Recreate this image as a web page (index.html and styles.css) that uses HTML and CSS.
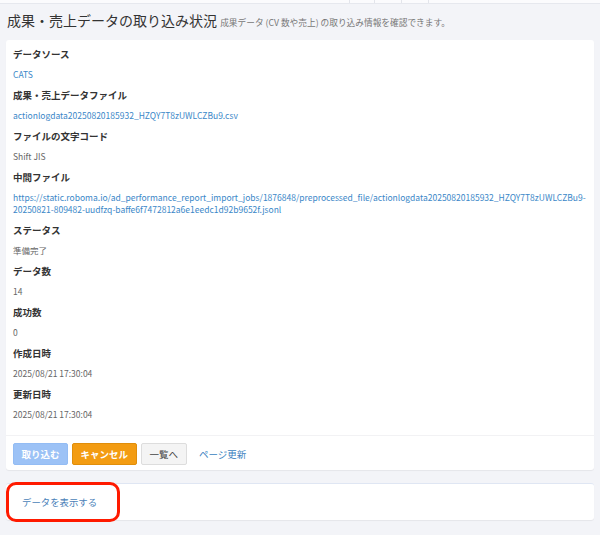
FILE: index.html
```html
<!DOCTYPE html>
<html lang="ja">
<head>
<meta charset="utf-8">
<title>成果・売上データの取り込み状況</title>
<link rel="stylesheet" href="styles.css">
</head>
<body>
<div class="topstrip">
  <div class="cell cell-a"></div>
  <div class="cell cell-b"></div>
  <div class="cell cell-c"></div>
  <div class="cell cell-d"></div>
  <div class="cell cell-e"></div>
</div>
<div class="page">
  <h1 class="title">成果・売上データの取り込み状況 <small class="subtitle">成果データ (CV 数や売上) の取り込み情報を確認できます。</small></h1>

  <div class="card">
    <dl class="details">
      <dt>データソース</dt>
      <dd><a class="link" href="#">CATS</a></dd>
      <dt>成果・売上データファイル</dt>
      <dd><a class="link" href="#">actionlogdata20250820185932_HZQY7T8zUWLCZBu9.csv</a></dd>
      <dt>ファイルの文字コード</dt>
      <dd>Shift JIS</dd>
      <dt>中間ファイル</dt>
      <dd><a class="link" href="#">https://static.roboma.io/ad_performance_report_import_jobs/1876848/preprocessed_file/actionlogdata20250820185932_HZQY7T8zUWLCZBu9-20250821-809482-uudfzq-baffe6f7472812a6e1eedc1d92b9652f.jsonl</a></dd>
      <dt>ステータス</dt>
      <dd>準備完了</dd>
      <dt>データ数</dt>
      <dd>14</dd>
      <dt>成功数</dt>
      <dd>0</dd>
      <dt>作成日時</dt>
      <dd>2025/08/21 17:30:04</dd>
      <dt>更新日時</dt>
      <dd>2025/08/21 17:30:04</dd>
    </dl>
    <div class="card-footer">
      <button class="btn btn-primary" disabled>取り込む</button>
      <button class="btn btn-warning">キャンセル</button>
      <button class="btn btn-default">一覧へ</button>
      <a class="btn-link" href="#">ページ更新</a>
    </div>
  </div>

  <div class="card card-data">
    <a class="data-link" href="#">データを表示する</a>
    <div class="highlight"></div>
  </div>
</div>
</body>
</html>
```

FILE: styles.css
```css
* { box-sizing: border-box; }
html, body {
  margin: 0;
  padding: 0;
}
body {
  background: #f3f4f8;
  font-family: "Noto Sans CJK JP", "Noto Sans", sans-serif;
  color: #333;
  height: 535px;
  overflow: hidden;
}
.topstrip {
  display: flex;
  height: 4px;
  background: #fbfbfd;
  border-bottom: 1px solid #e6e8ee;
}
.cell { height: 100%; border-right: 1px solid #e3e5eb; }
.cell-a { width: 350px; }
.cell-b { width: 25px; }
.cell-c { width: 27px; }
.cell-d { width: 27px; }
.cell-e { flex: 1; border-right: none; }
.page {
  padding: 0 6px;
}
.title {
  margin: 4px 0 0 1px;
  font-size: 14px;
  line-height: 24px;
  font-weight: 400;
  color: #333;
  white-space: nowrap;
}
.subtitle {
  font-size: 8.7px;
  color: #777;
  font-weight: 400;
}
.card {
  margin-top: 5px;
  background: #fff;
  border-radius: 3px;
  box-shadow: 0 1px 1px rgba(0, 0, 0, 0.06);
}
.details {
  margin: 0;
  padding: 7px 7px 7px 7px;
}
.details dt {
  font-size: 9.5px;
  line-height: 14px;
  font-weight: 700;
  color: #333;
}
.details dd {
  margin: 7px 0 8px 0;
  font-size: 8.5px;
  line-height: 12px;
  color: #666;
}
.link {
  color: #3a87c8;
  text-decoration: none;
}
.card-footer {
  border-top: 1px solid #f2f2f4;
  padding: 7px 7px 5px;
  display: flex;
  align-items: center;
  gap: 4px;
}
.btn {
  height: 22px;
  padding: 0 7.5px;
  border-radius: 2px;
  font-family: inherit;
  font-size: 9.5px;
  font-weight: 700;
  border: 1px solid transparent;
  line-height: 20px;
}
.btn-primary {
  background: #9cc2f6;
  border-color: #93bcf4;
  color: #fff;
}
.btn-warning {
  background: #f39c12;
  border-color: #e08e0b;
  color: #fff;
}
.btn-default {
  background: #f4f4f4;
  border-color: #ddd;
  color: #444;
  font-weight: 400;
  padding: 0 8px;
}
.btn-link {
  margin-left: 8px;
  font-size: 9.5px;
  color: #3a7fc0;
  text-decoration: none;
}
.card-data {
  position: relative;
  margin-top: 13px;
  border-top: 1px solid #dfe6f3;
  height: 37px;
  display: flex;
  align-items: center;
  padding-left: 16px;
}
.data-link {
  font-size: 9.4px;
  color: #4a7fb8;
  text-decoration: none;
}
.highlight {
  position: absolute;
  left: 0;
  top: -2px;
  width: 114px;
  height: 40px;
  border: 3px solid #ff1a00;
  border-radius: 10px;
}
```
